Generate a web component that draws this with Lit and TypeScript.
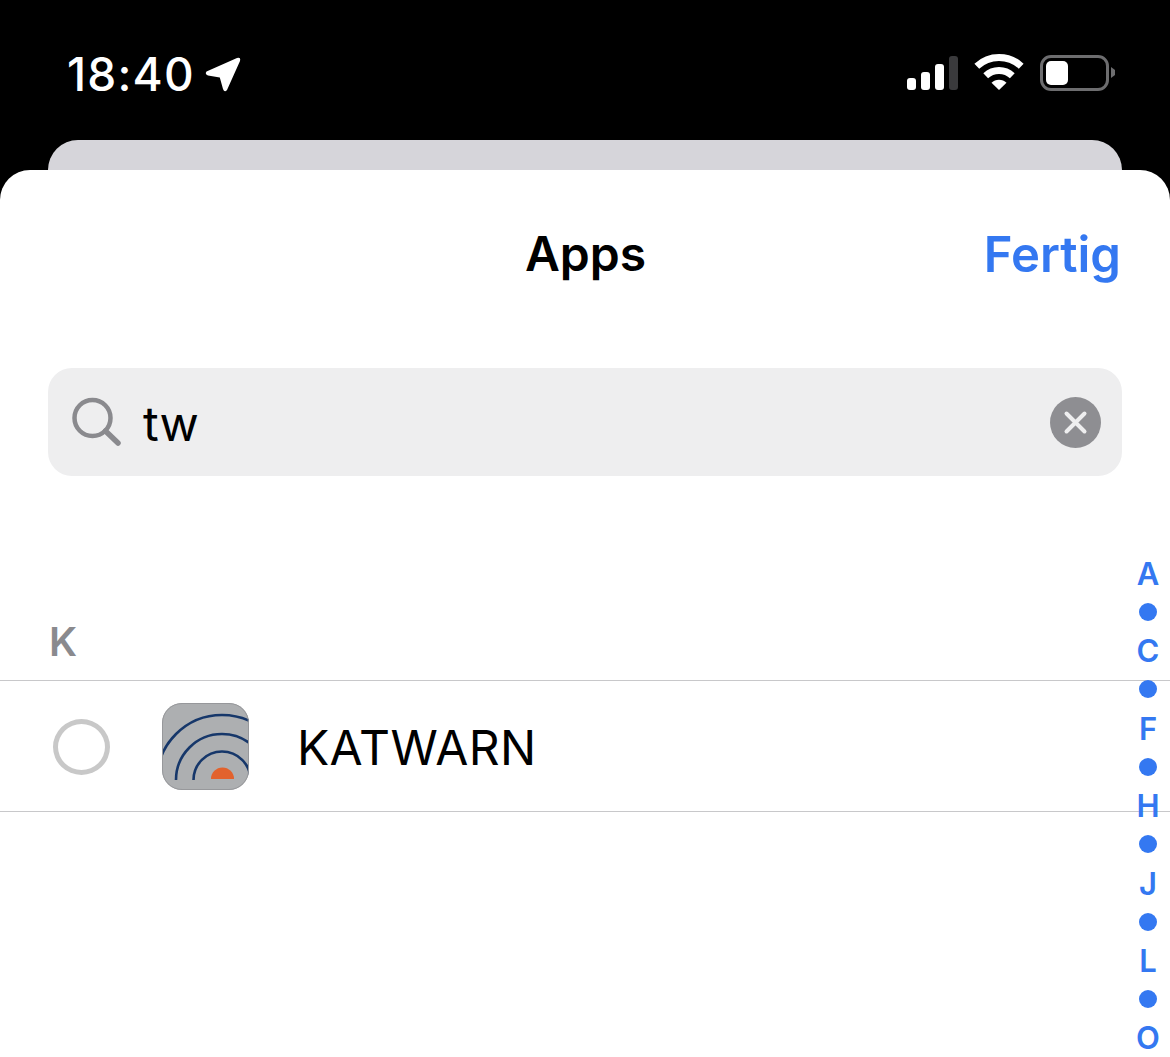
import { LitElement, html, css } from "lit";
import { customElement } from "lit/decorators.js";

const INDEX = ["A", "", "C", "", "F", "", "H", "", "J", "", "L", "", "O"];

@customElement("app-root")
export class AppRoot extends LitElement {
  static styles = css`
    :host {
      display: block;
      width: 1170px;
      height: 1057px;
      overflow: hidden;
      background: #000;
      font-family: Inter, "Liberation Sans", sans-serif;
      position: relative;
      color: #000;
    }
    .status {
      height: 140px;
      box-sizing: border-box;
      padding: 48px 55px 0 67px;
      display: flex;
      justify-content: space-between;
      align-items: flex-start;
      color: #fff;
    }
    .time-wrap { display: flex; align-items: center; gap: 9px; height: 50px; margin-top: 1px; }
    .time { font-size: 46px; font-weight: 500; line-height: 50px; letter-spacing: 1.2px; }
    .indicators { display: flex; align-items: flex-start; }
    .indicators svg { display: block; }
    .back {
      height: 30px;
      margin: 0 48px;
      background: #d6d5da;
      border-radius: 30px 30px 0 0;
    }
    .sheet {
      position: absolute;
      left: 0; right: 0; top: 170px; bottom: 0;
      background: #fff;
      border-radius: 30px 30px 0 0;
    }
    .nav {
      height: 170px;
      box-sizing: border-box;
      padding: 53px 49px 0 50px;
      display: grid;
      grid-template-columns: 1fr auto 1fr;
      align-items: start;
    }
    .title { grid-column: 2; font-size: 48px; line-height: 62px; font-weight: 600; }
    .done { grid-column: 3; justify-self: end; font-size: 49px; line-height: 62px; font-weight: 600; color: #3478f1; margin-top: 1px; }
    .search {
      margin: 28px 48px 0;
      height: 108px;
      box-sizing: border-box;
      background: #eeeeef;
      border-radius: 24px;
      display: flex;
      align-items: center;
      padding: 0 21px 0 24px;
    }
    .query { flex: 1; font-size: 48px; line-height: 60px; margin: 4px 0 0 21px; }
    .section {
      margin-top: 138px;
      height: 67px;
      box-sizing: border-box;
      padding: 0 49px;
      font-size: 40px;
      line-height: 56px;
      font-weight: 600;
      color: #8a8a8e;
      border-bottom: 1px solid #c8c8ca;
    }
    .row {
      height: 131px;
      box-sizing: border-box;
      border-bottom: 1px solid #c8c8ca;
      display: flex;
      align-items: center;
      padding: 0 0 0 53px;
    }
    .radio {
      width: 57px; height: 56px;
      box-sizing: border-box;
      border: 5px solid #c8c8c8;
      border-radius: 50%;
      margin-top: 2px;
    }
    .appicon { margin-left: 52px; display: block; }
    .name { margin: 4px 0 0 48px; font-size: 48px; line-height: 60px; letter-spacing: 0.37px; }
    .index {
      position: absolute;
      right: 0;
      top: 555px;
      width: 44px;
      display: flex;
      flex-direction: column;
      align-items: center;
      color: #3478f1;
      font-size: 31px;
      font-weight: 600;
    }
    .index > div { height: 38.7px; line-height: 38.7px; display: flex; align-items: center; justify-content: center; }
    .dot { width: 18px; height: 18px; border-radius: 50%; background: #3478f1; margin-top: -2px; }
  `;

  render() {
    return html`
      <div class="status">
        <div class="time-wrap">
          <span class="time">18:40</span>
          <svg width="38" height="38" viewBox="0 0 38 38">
            <path d="M2.5 16.5 L33 3 Q37 1.8 36 6 L23 35 Q20.5 38 19 34 L15.8 22.5 L4 20.5 Q0.5 19 2.5 16.5Z" fill="#fff"/>
          </svg>
        </div>
        <div class="indicators">
          <svg width="208" height="50" viewBox="0 0 208 50">
            <rect x="0" y="30" width="9" height="12" rx="3" fill="#fff"/>
            <rect x="14" y="24" width="9" height="18" rx="3" fill="#fff"/>
            <rect x="28" y="16" width="9" height="26" rx="3" fill="#fff"/>
            <rect x="42" y="8" width="9" height="34" rx="3" fill="#3a3a3c"/>
            <path d="M69.8 18.2 A32.5 32.5 0 0 1 114.2 18.2" fill="none" stroke="#fff" stroke-width="7"/>
            <path d="M78.7 27.7 A19.5 19.5 0 0 1 105.3 27.7" fill="none" stroke="#fff" stroke-width="7"/>
            <path d="M92 42 L84.5 34.8 A10.5 10.5 0 0 1 99.5 34.8Z" fill="#fff"/>
            <rect x="134.5" y="8.5" width="66" height="33" rx="9.5" fill="none" stroke="#6d6d6f" stroke-width="3"/>
            <rect x="139" y="13" width="22" height="24" rx="5" fill="#fff"/>
            <path d="M204 19 L208 22 L208 27 L204 30Z" fill="#6d6d6f"/>
          </svg>
        </div>
      </div>
      <div class="back"></div>
      <div class="sheet">
        <div class="nav">
          <div class="title">Apps</div>
          <div class="done">Fertig</div>
        </div>
        <div class="search">
          <svg width="50" height="50" viewBox="0 0 50 50">
            <circle cx="20.5" cy="21" r="18" fill="none" stroke="#8a8a8e" stroke-width="4.5"/>
            <path d="M33.5 34 L46 46" stroke="#8a8a8e" stroke-width="5.5" stroke-linecap="round"/>
          </svg>
          <span class="query">tw</span>
          <svg width="51" height="51" viewBox="0 0 51 51">
            <circle cx="25.5" cy="25.5" r="25.5" fill="#8e8e92"/>
            <path d="M16.5 16.5 L34.5 34.5 M34.5 16.5 L16.5 34.5" stroke="#eeeeef" stroke-width="4" stroke-linecap="round"/>
          </svg>
        </div>
        <div class="section">K</div>
        <div class="row">
          <div class="radio"></div>
          <svg class="appicon" width="87" height="87" viewBox="0 0 87 87">
            <defs><clipPath id="ic"><rect width="87" height="87" rx="20"/></clipPath></defs>
            <g clip-path="url(#ic)">
              <rect width="87" height="87" fill="#adafb1"/>
              <circle cx="60" cy="77" r="65" fill="none" stroke="#16376a" stroke-width="2.6"/>
              <path d="M14 77 A46 46 0 0 1 60 31 A46 46 0 0 1 106 77" fill="none" stroke="#16376a" stroke-width="2.6"/>
              <path d="M31.5 77 A28.5 28.5 0 0 1 60 48.5 A28.5 28.5 0 0 1 88.5 77" fill="none" stroke="#16376a" stroke-width="2.6"/>
              <path d="M49 76 A11.5 11.5 0 0 1 72 76Z" fill="#e2622d"/>
            </g>
            <rect x="0.5" y="0.5" width="86" height="86" rx="19.5" fill="none" stroke="#97989b"/>
          </svg>
          <span class="name">KATWARN</span>
        </div>
      </div>
      <div class="index">
        ${INDEX.map((l) => html`<div>${l ? l : html`<span class="dot"></span>`}</div>`)}
      </div>
    `;
  }
}
